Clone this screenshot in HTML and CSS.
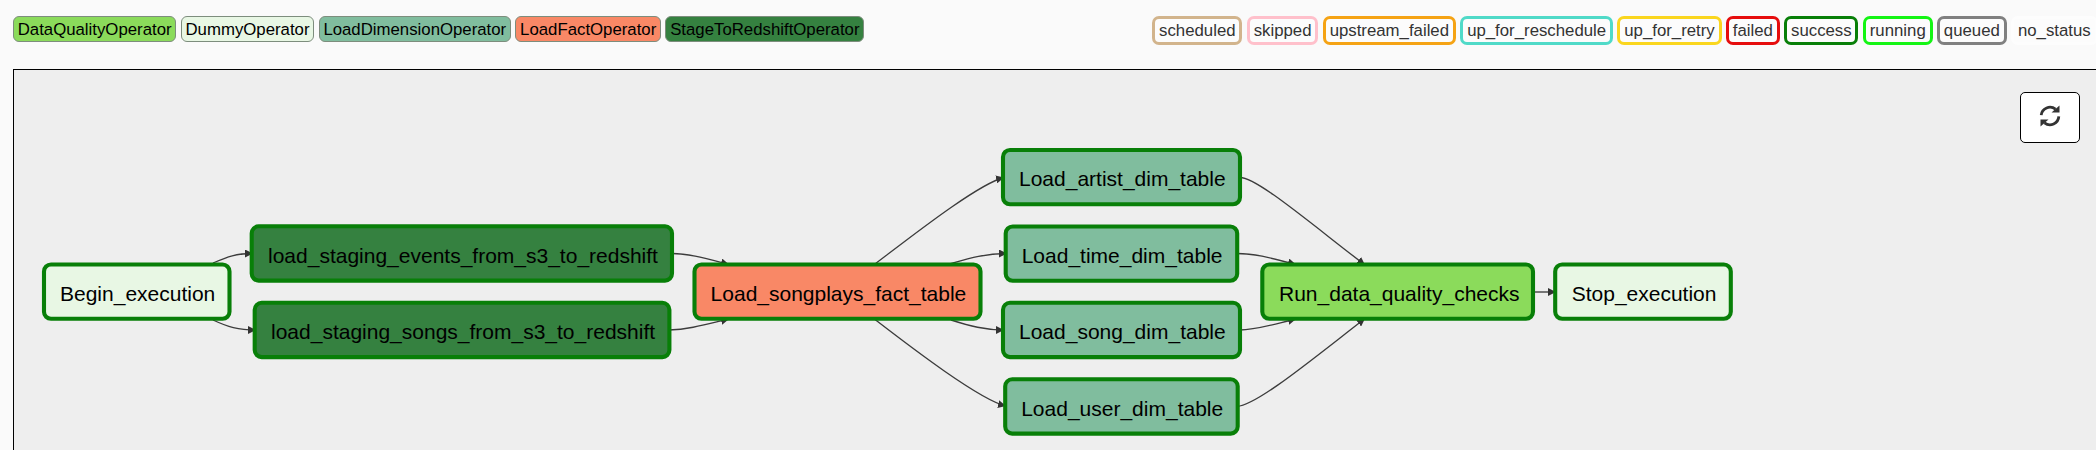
FILE: index.html
```
<!DOCTYPE html>
<html lang="en">
<head>
<meta charset="utf-8">
<title>Graph View</title>
<link rel="stylesheet" href="styles.css">
</head>
<body>
<header class="legend">
  <div class="legend-group">
    <span class="operator op-quality">DataQualityOperator</span>
    <span class="operator op-dummy">DummyOperator</span>
    <span class="operator op-dimension">LoadDimensionOperator</span>
    <span class="operator op-fact">LoadFactOperator</span>
    <span class="operator op-stage">StageToRedshiftOperator</span>
  </div>
  <div class="legend-group states">
    <span class="state st-scheduled">scheduled</span>
    <span class="state st-skipped">skipped</span>
    <span class="state st-upstream">upstream_failed</span>
    <span class="state st-reschedule">up_for_reschedule</span>
    <span class="state st-retry">up_for_retry</span>
    <span class="state st-failed">failed</span>
    <span class="state st-success">success</span>
    <span class="state st-running">running</span>
    <span class="state st-queued">queued</span>
    <span class="state st-none">no_status</span>
  </div>
</header>
<main class="canvas">
  <svg class="graph" width="2082" height="380" viewBox="14 70 2082 380">
    <defs>
      <marker id="arrow" viewBox="0 0 8 8" refX="8" refY="4" markerWidth="8" markerHeight="8" markerUnits="userSpaceOnUse" orient="auto">
        <path class="arrow-head" d="M0 0L8 4L0 8z"/>
      </marker>
    </defs>
    <g class="edges">
      <path d="M213 263C228 256.500 236 253.500 253 253.500"/>
      <path d="M213 320C228 327 238 330 256 330"/>
      <path d="M672 253.500C688 253.500 704 258 729 264.500"/>
      <path d="M669 330C688 329.500 704 325 729 319"/>
      <path d="M875 264C912 236 978 184 1004 177.500"/>
      <path d="M951 263.500C970 258 985 253.500 1007 253.500"/>
      <path d="M951 320C970 326 985 330 1004 330"/>
      <path d="M875 319.500C912 348 980 400 1006 406"/>
      <path d="M1240 177.500C1257 177.500 1310 223 1365 265"/>
      <path d="M1237 253.500C1255 253.500 1271 258 1296 264.500"/>
      <path d="M1240 330C1255 330 1271 325 1296 319"/>
      <path d="M1237 406.500C1257 405 1310 361 1365 318.500"/>
      <path d="M1533 292H1556"/>
    </g>
    <g class="node op-dummy"><rect x="44" y="264.500" width="185.500" height="54.300" rx="7"/><text x="60" y="301">Begin_execution</text></g>
    <g class="node op-stage"><rect x="251.700" y="226.300" width="420.300" height="54.300" rx="7"/><text x="268" y="263">load_staging_events_from_s3_to_redshift</text></g>
    <g class="node op-stage"><rect x="254.700" y="302.800" width="414.700" height="54.300" rx="7"/><text x="271" y="339">load_staging_songs_from_s3_to_redshift</text></g>
    <g class="node op-fact"><rect x="694.500" y="264.500" width="286" height="54.300" rx="7"/><text x="710.600" y="301">Load_songplays_fact_table</text></g>
    <g class="node op-dimension"><rect x="1003" y="150" width="237" height="54.300" rx="7"/><text x="1019" y="186">Load_artist_dim_table</text></g>
    <g class="node op-dimension"><rect x="1005.700" y="226.500" width="231.500" height="54.300" rx="7"/><text x="1021.700" y="263">Load_time_dim_table</text></g>
    <g class="node op-dimension"><rect x="1003" y="302.800" width="237" height="54.300" rx="7"/><text x="1019" y="339">Load_song_dim_table</text></g>
    <g class="node op-dimension"><rect x="1005.200" y="379.300" width="232.500" height="54.300" rx="7"/><text x="1021.200" y="416">Load_user_dim_table</text></g>
    <g class="node op-quality"><rect x="1262.300" y="264.500" width="270.700" height="54.300" rx="7"/><text x="1279" y="301">Run_data_quality_checks</text></g>
    <g class="node op-dummy"><rect x="1555.200" y="264.500" width="175.600" height="54.300" rx="7"/><text x="1571.700" y="301">Stop_execution</text></g>
  </svg>
  <button class="refresh" aria-label="Refresh">
    <svg width="22" height="22" viewBox="0 0 22 22">
      <path class="arc" d="M2.200 10.200A8.800 8.800 0 0 1 16.500 4.200M19.800 11.400A8.800 8.800 0 0 1 5.500 17.800"/>
      <path class="tip" d="M20.500 .500V7.500H12.500zM1.500 21.500V14.500H9.500z"/>
    </svg>
  </button>
</main>
</body>
</html>
```
FILE: styles.css
```
* { box-sizing: border-box; }
body {
  margin: 0;
  height: 450px;
  overflow: hidden;
  display: flex;
  flex-direction: column;
  background: #fafafa;
  font-family: "Liberation Sans", Arial, sans-serif;
  font-size: 16.8px;
}
.legend {
  flex: none;
  display: flex;
  justify-content: space-between;
  align-items: flex-start;
  height: 69px;
  padding: 16px 0 0 13px;
}
.legend-group { display: flex; gap: 4.5px; white-space: nowrap; }
.states { margin-right: -1.5px; }
.operator {
  height: 26px;
  padding: 0 3.7px;
  line-height: 25px;
  border: 1px solid #7d8d7d;
  border-radius: 6px;
  color: #000;
}
.op-quality { background: #8bdb5b; fill: #8bdb5b; }
.op-dummy { background: #e8f7e4; fill: #e8f7e4; }
.op-dimension { background: #80bd9e; fill: #80bd9e; }
.op-fact { background: #f98866; fill: #f98866; }
.op-stage { background: #358140; fill: #358140; }
.state {
  height: 29px;
  padding: 0 3.8px;
  line-height: 23.5px;
  border: 3px solid;
  border-radius: 7px;
  background: #fcfcfc;
  color: #333;
}
.st-scheduled { border-color: #d2b48c; }
.st-skipped { border-color: #ffc0cb; }
.st-upstream { border-color: #f5a314; }
.st-reschedule { border-color: #50dac8; }
.st-retry { border-color: #fad61e; }
.st-failed { border-color: #e60d0d; }
.st-success { border-color: #087f08; }
.st-running { border-color: #14f514; }
.st-queued { border-color: #808080; }
.st-none { border-color: #fdfdfd; }
.canvas {
  flex: 1;
  position: relative;
  margin-left: 13px;
  border: solid #000;
  border-width: 1px 0 0 1px;
  background: #eee;
}
.graph { display: block; }
.edges path { fill: none; stroke: #3c3c3c; stroke-width: 1.35px; marker-end: url(#arrow); }
.arrow-head { fill: #333; }
.node { background: none; }
.node rect { stroke: #087f08; stroke-width: 4.1px; }
.node text { fill: #000; font-size: 21px; }
.refresh {
  position: absolute;
  top: 22px;
  right: 16px;
  width: 60px;
  height: 51px;
  padding: 0 0 4px;
  display: flex;
  align-items: center;
  justify-content: center;
  border: 1px solid #000;
  border-radius: 5px;
  background: #fff;
}
.arc { fill: none; stroke: #333; stroke-width: 2.8px; }
.tip { fill: #333; }
```
